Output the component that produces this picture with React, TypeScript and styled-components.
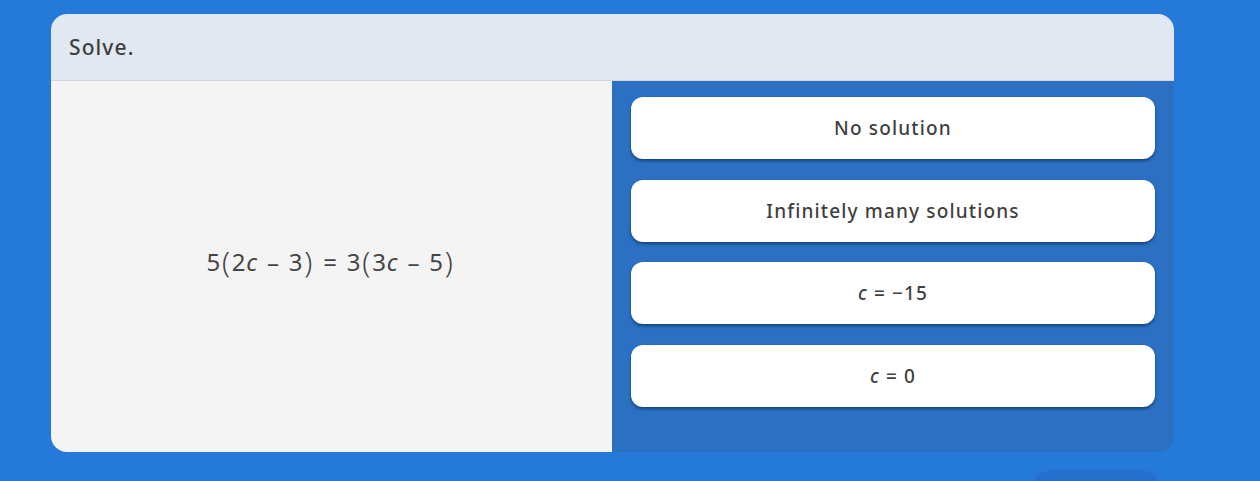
import React from "react";
import styled, { createGlobalStyle } from "styled-components";

const Global = createGlobalStyle`
  html, body { margin: 0; padding: 0; background: #2579d8; }
  body { font-family: "Noto Sans", "Open Sans", sans-serif; overflow: hidden; }
`;

const Page = styled.div`
  width: 1260px;
  height: 481px;
  padding: 14px 0 0 51px;
  box-sizing: border-box;
  display: flex;
  flex-direction: column;
  overflow: hidden;
`;

const Card = styled.div`
  flex-shrink: 0;
  width: 1123px;
  border-radius: 16px;
  overflow: hidden;
  display: flex;
  flex-direction: column;
`;

const Header = styled.div`
  flex-shrink: 0;
  height: 67px;
  box-sizing: border-box;
  background: #e1e8f2;
  border-bottom: 1px solid #cfd6df;
  display: flex;
  align-items: center;
  padding-left: 18px;
  font-size: 21px;
  font-weight: 500;
  letter-spacing: 1.1px;
  color: #3f3f3f;
`;

const Body = styled.div`
  flex-shrink: 0;
  display: grid;
  grid-template-columns: 561px 1fr;
  height: 371px;
`;

const Stem = styled.div`
  background: #f4f4f4;
  display: flex;
  align-items: center;
  justify-content: center;
`;

const Equation = styled.div`
  font-size: 24px;
  color: #454545;
  letter-spacing: 0.8px;
  display: flex;
  align-items: center;
  margin-top: -10px;
  margin-left: -2px;
`;

const Paren = styled.span`
  font-size: 29px;
  font-weight: 300;
  line-height: 1;
  margin: 0 1px;
`;

const Var = styled.i`
  font-style: italic;
`;

const Op = styled.span`
  margin: 0 9px;
`;

const Choices = styled.div`
  background: #2b70c2;
  padding: 16px 19px;
  display: flex;
  flex-direction: column;
  gap: 20.5px;
`;

const Choice = styled.button`
  flex-shrink: 0;
  height: 62px;
  border: none;
  border-radius: 12px;
  background: #ffffff;
  box-shadow: 0 2px 3px rgba(10, 30, 70, 0.55);
  font-family: inherit;
  font-size: 19px;
  font-weight: 500;
  letter-spacing: 1.15px;
  color: #3f3f3f;
  display: flex;
  align-items: center;
  justify-content: center;
  padding: 0;
  margin: 0;
  cursor: pointer;
`;

const Footer = styled.div`
  flex-shrink: 0;
  width: 1123px;
  display: flex;
  justify-content: flex-end;
  padding-right: 12px;
  box-sizing: border-box;
  margin-top: 18px;
`;

const NextButton = styled.div`
  width: 132px;
  height: 44px;
  border-radius: 22px;
  background: #2470cc;
`;

export default function App() {
  return (
    <>
      <Global />
      <Page>
        <Card>
          <Header>Solve.</Header>
          <Body>
            <Stem>
              <Equation>
                5<Paren>(</Paren>2<Var>c</Var>
                <Op>–</Op>3<Paren>)</Paren>
                <Op>=</Op>3<Paren>(</Paren>3<Var>c</Var>
                <Op>–</Op>5<Paren>)</Paren>
              </Equation>
            </Stem>
            <Choices>
              <Choice>No solution</Choice>
              <Choice>Infinitely many solutions</Choice>
              <Choice>
                <Var>c</Var>&nbsp;= −15
              </Choice>
              <Choice>
                <Var>c</Var>&nbsp;= 0
              </Choice>
            </Choices>
          </Body>
        </Card>
        <Footer>
          <NextButton />
        </Footer>
      </Page>
    </>
  );
}
